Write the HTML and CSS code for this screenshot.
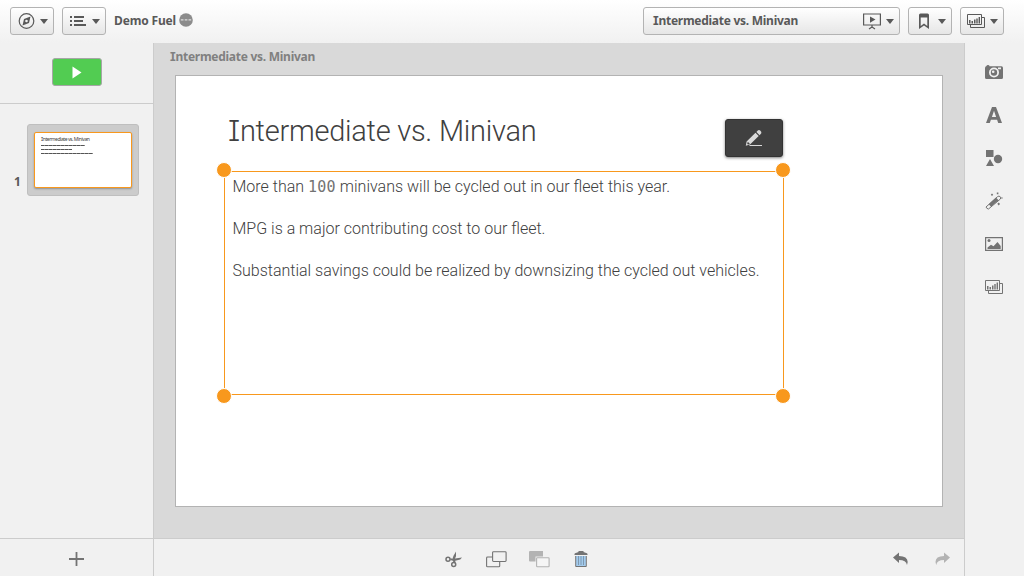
FILE: index.html
```html
<!DOCTYPE html>
<html lang="en">
<head>
<meta charset="utf-8">
<title>Demo Fuel</title>
<link rel="stylesheet" href="styles.css">
</head>
<body>
<div class="app">
  <header class="topbar">
    <button class="btn"><svg width="17" height="16" viewBox="0 0 17 16"><circle cx="8.500" cy="8" r="7.300" fill="none" stroke="#595959" stroke-width="1.200"/><path fill="#595959" fill-rule="evenodd" d="M12.500 3.600 11 10l-6.500 2.500L6 6zM8.500 6.700a1.300 1.300 0 1 0 0 2.600 1.300 1.300 0 0 0 0-2.600"/></svg><i class="caret"></i></button>
    <button class="btn"><svg width="18" height="12" viewBox="0 0 18 12"><path fill="#595959" d="M0 1h2v2H0zM0 5h2v2H0zM0 9h2v2H0zM4 1h10v2H4zM4 5h9v2H4zM4 9h12v2H4z"/></svg><i class="caret"></i></button>
    <span class="appname">Demo Fuel</span>
    <svg class="more" width="14" height="14" viewBox="0 0 14 14"><circle cx="7" cy="7" r="6.800" fill="#8c8c8c"/><path fill="#ddd" d="M1.800 6.200h2.700v1.300H1.800zM5.700 6.200h2.700v1.300H5.700zM9.500 6.200h2.700v1.300H9.500z"/></svg>
    <button class="btn story"><span class="storyname"><span class="serif-i">I</span>ntermediate vs. Minivan</span><svg width="18" height="17" viewBox="0 0 18 17"><path d="M.6 1h16.800v11H.6zM9 12v3M6 16l3-2 3 2" fill="none" stroke="#595959" stroke-width="1.200"/><path d="m7 3.500 5.500 3L7 9.700z" fill="#595959"/></svg><i class="caret"></i></button>
    <button class="btn bookmark"><svg width="12" height="17" viewBox="0 0 12 17"><path fill="#595959" fill-rule="evenodd" d="M1 2Q1 .5 2.500.5h7Q11 .5 11 2V16l-5-3.600L1 16zM2.700 4.500V13L6 10.500 9.300 13V4.500z"/></svg><i class="caret"></i></button>
    <button class="btn sheets"><svg width="19" height="15" viewBox="0 0 19 15"><path d="M.5.5h14v10H.5zM15 3.500h2.500v10H3.500V11" fill="none" stroke="#595959"/><path fill="#595959" d="M2 6h1.500v3.500H2zM4.500 7H6v2.500H4.500zM7 5.500h1.500v4H7zM9.300 4.500h1.400v5H9.300zM11.600 3H13v6.500h-1.400z"/></svg><i class="caret"></i></button>
  </header>
  <aside class="slides">
    <div class="playrow"><button class="play"><svg width="10" height="13" viewBox="0 0 10 13"><path fill="#fff" d="M.5.5 9.500 6.500l-9 6z"/></svg></button></div>
    <div class="thumbrow"><span class="num">1</span>
      <div class="thumb"><div class="mini"><p class="minititle"><span class="serif-i">I</span>ntermediate vs. Minivan</p><i class="line w44"></i><i class="line w31"></i><i class="line w52"></i></div></div>
    </div>
  </aside>
  <main class="stage">
    <div class="sheetname"><span class="serif-i">I</span>ntermediate vs. Minivan</div>
    <div class="slide">
      <h1 class="title"><span class="serif-i">I</span>ntermediate vs. Minivan</h1>
      <button class="edit"><svg width="18" height="18" viewBox="0 0 18 18"><path fill="#d9d9d9" d="M.8 16.700 1.600 12.500 10.500 3.700l3.200 3.200L5 15.500zM11.400 3 12.800 1.500q1.300-1 2.600.3 1.400 1.200.9 2.500l-1.700 1.900zM5 15.900h12v1H4z"/><path fill="#404040" d="m2.800 12.800 2.200 2.200-2 .6-.8-.8z"/></svg></button>
      <div class="textbox">
        <p class="para">More than <span class="zero">100</span> minivans will be cycled out in our fleet this year.</p>
        <p class="para">MPG is a major contributing cost to our fleet.</p>
        <p class="para">Substantial savings could be realized by downsizing the cycled out vehicles.</p>
        <i class="dot tl"></i><i class="dot tr"></i><i class="dot bl"></i><i class="dot br"></i>
      </div>
    </div>
  </main>
  <aside class="tools">
    <svg width="20" height="20" viewBox="0 0 20 20"><path fill="#737373" fill-rule="evenodd" d="M2.500 4Q2.500 3 4 3t1.500 1.200h12Q19 4.200 19 6v9.500q0 1.500-1.500 1.500h-15Q1 17 1 15.500V6q0-1.500 1.500-2M10 5.500a5 5 0 1 0 0 10 5 5 0 0 0 0-10m0 1.800a3.200 3.200 0 1 1 0 6.400 3.200 3.200 0 0 1 0-6.400m4-1.700v1.700h3V5.600z"/><circle cx="9.200" cy="9.800" r="1.300" fill="#f1f1f1"/></svg>
    <svg width="20" height="20" viewBox="0 0 20 20"><path fill="#737373" fill-rule="evenodd" d="M8 2h4l6 16h-3.800l-1.100-3.300H6.900L5.800 18H2zM10 5.800 7.900 12h4.200z"/></svg>
    <svg width="20" height="20" viewBox="0 0 20 20"><path fill="#737373" d="M2 2h7.500v7H2zM6 11l4 7H2z"/><circle cx="14" cy="11" r="4.200" fill="#737373"/></svg>
    <svg width="20" height="20" viewBox="0 0 20 20"><path d="m2 16 11.500-10.300q1.500-1.200 2.700 0t0 2.500L4.500 18q-2-.3-2.500-2z" fill="#f1f1f1" stroke="#737373"/><path fill="#737373" d="m4.700 13.300 7.300-6.700 2.500 2.600-7.400 6.500zM8 2.500 9.200 3.800 8 5 6.800 3.800zM12.800 1.600h1.600v1.600h-1.600zM17.500 6l1.500 1-1.500 1zM13.300 12.700l1.500-1.200 1.200 1.500-1.300 1.500z"/></svg>
    <svg width="20" height="20" viewBox="0 0 20 20"><path d="M1.600 3.600h16.800v12.800H1.600z" fill="none" stroke="#737373" stroke-width="1.200"/><path fill="#737373" d="M3.500 15v-1.500L7 10.800l2.500 1.500L13.500 8l3.200 4v3z"/><circle cx="5" cy="6.500" r="1.500" fill="#737373"/></svg>
    <svg width="20" height="20" viewBox="0 0 20 20"><path d="M1.500 3.500h14v10h-14zM16 6.500h2.500v10h-14V14" fill="none" stroke="#737373"/><path fill="#737373" d="M3 9h1.500v3.500H3zM5.500 10H7v2.500H5.500zM8 8.500h1.500v4H8zM10.300 7h1.400v5.500h-1.400zM12.600 5.500H14v7h-1.400z"/></svg>
  </aside>
  <div class="addbar"><svg width="15" height="14" viewBox="0 0 15 14"><path fill="#737373" d="M0 6h15v2H0zM6.600 0h1.800v14H6.600z"/></svg></div>
  <footer class="editbar">
    <svg width="18" height="18" viewBox="0 0 18 18"><g fill="none" stroke="#737373" stroke-width="1.500"><circle cx="3" cy="9.300" r="2"/><circle cx="8.700" cy="14.500" r="2"/></g><path fill="#737373" d="M11 1.500v4.800L10 8.600l7-1.100-1.800 2-5 1.300.4 2.200-1.900-.3-.8-1.900-2.700-.8.300-1.700 2 .4.900-2.700z"/></svg>
    <svg class="front" width="21" height="17" viewBox="0 0 21 17"><path d="M6.500 6H1.500q-.9 0-.9.900v8q0 .9.900.9h11.300q.9 0 .9-.9v-4.400" fill="none" stroke="#737373" stroke-width="1.100"/><rect x="6.600" y=".7" width="13.500" height="9.800" rx=".9" fill="none" stroke="#737373" stroke-width="1.100"/></svg>
    <svg class="back" width="21" height="17" viewBox="0 0 21 17"><path fill="#b3b3b3" d="M0 1q0-1 1-1h13v5.500H6.500v5H1q-1 0-1-1z"/><rect x="7.600" y="6.700" width="12.500" height="9" rx=".7" fill="#f5f5f5" stroke="#b3b3b3" stroke-width="1.100"/></svg>
    <svg class="trash" width="14" height="17" viewBox="0 0 14 17"><path fill="#737373" d="M.5 3q0-1 2-1.300L4.500 1V0h5v1l2 .7q2 .3 2 1.300v1H.5z"/><path fill="#a3cbed" d="M2 5h10v10H2z"/><path d="M1.700 5v10.500h10.600V5" fill="none" stroke="#737373"/><path d="M4.500 5v9M7 5v9M9.500 5v9" fill="none" stroke="#7f99b0"/></svg>
    <svg class="undo" width="16" height="14" viewBox="0 0 16 14"><path fill="#737373" d="m0 5.500 6-5V4q8.500 0 8.700 6l-.7 3q-.8-5-8-5v3z"/></svg>
    <svg class="redo" width="16" height="14" viewBox="0 0 16 14"><path fill="#b3b3b3" d="m15 5.500-6-5V4Q.500 4 .500 10l.7 3Q2 8 9 8v3z"/></svg>
  </footer>
</div>
</body>
</html>
```
FILE: styles.css
```css
* { box-sizing: border-box; }
body { margin: 0; font-family: "Noto Sans", sans-serif; color: #595959; }
button { margin: 0; padding: 0; font: inherit; color: inherit; }
svg { display: block; flex: none; }
p, h1 { margin: 0; white-space: nowrap; }
.serif-i { font-family: Inter, sans-serif; font-feature-settings: "cv08"; }
.zero { font-family: "DejaVu Sans Mono", monospace; font-size: 15px; color: #737373; letter-spacing: .3px; }

.app {
  width: 1024px; height: 576px; overflow: hidden;
  display: grid;
  grid-template: 43px 495px 38px / 154px 811px 59px;
  background: #f1f1f1;
}
.topbar {
  grid-column: 1 / -1;
  display: flex; align-items: flex-start; gap: 8px;
  padding: 7px 20px 0 10px;
  background: linear-gradient(#fff, #f1f1f1);
}
.btn {
  width: 44px; height: 28px; flex: none;
  display: flex; align-items: center; justify-content: space-between;
  padding: 0 5px 0 7px;
  border: 1px solid #b3b3b3; border-radius: 3px;
  background: linear-gradient(#fff, #e6e6e6);
}
.btn.bookmark { padding: 0 5px 0 9px; }
.btn.sheets { padding-left: 6px; }
.caret { border: 4px solid transparent; border-top: 5px solid #595959; border-bottom: 0; }
.appname { font-size: 12px; font-weight: 700; line-height: 27px; letter-spacing: -.15px; width: 61px; white-space: nowrap; }
.more { margin: 6px auto 0 -4.5px; }
.btn.story { width: 257px; padding-left: 9px; }
.storyname { font-size: 12px; line-height: 16px; font-weight: 700; white-space: nowrap; margin-right: auto; letter-spacing: -.27px; }
.btn.story svg { margin-right: 5px; }

.slides { border-right: 1px solid #ccc; }
.playrow { height: 61px; padding: 15px 0 0 52px; border-bottom: 1px solid #ccc; }
.play {
  width: 50px; height: 28px; display: flex; align-items: center; justify-content: center;
  background: #52cc52; border: 1px solid #a6a6a6; border-radius: 3px;
}
.thumbrow { display: flex; padding: 20px 0 0 14px; }
.num { width: 13px; padding-top: 49px; font-size: 12px; line-height: 17px; font-weight: 700; }
.thumb { width: 112px; height: 72px; padding: 7px 6px; background: #ccc; border: 1px solid #bfbfbf; border-radius: 3px; }
.mini {
  width: 98px; height: 56px; padding: 3px 0 0 6px; background: #fff;
  border: 1px solid #f8981d; border-radius: 2px; box-shadow: 0 1px 2px rgba(0,0,0,.3);
}
.minititle { font-size: 5px; line-height: 7px; letter-spacing: -.43px; color: #404040; }
.line { display: block; height: 1px; margin: 2px 0 3px; background: repeating-linear-gradient(90deg, #555 0 3px, #888 3px 4px); }
.w44 { width: 44px; }
.w31 { width: 31px; }
.w52 { width: 52px; }

.stage { background: #d9d9d9; border-right: 1px solid #ccc; padding-left: 21px; }
.sheetname { height: 32px; margin-left: -5px; font-size: 12px; line-height: 27px; font-weight: 700; color: #808080; letter-spacing: -.27px; }
.slide { position: relative; width: 768px; height: 432px; background: #fff; border: 1px solid #b3b3b3; }
.title { position: absolute; left: 52px; top: 35px; font-family: Roboto, sans-serif; font-size: 29px; line-height: 40px; font-weight: 300; letter-spacing: -.25px; color: #404040; }
.edit {
  position: absolute; left: 549px; top: 43px; width: 58px; height: 38px;
  display: flex; align-items: center; justify-content: center;
  background: #404040; border: 1px solid #333; border-radius: 3px; box-shadow: 0 1px 3px rgba(0,0,0,.5);
}
.textbox { position: absolute; left: 48px; top: 95px; width: 560px; height: 224px; border: 1px solid #f8981d; padding: 4px 7.5px; }
.para { font-family: Roboto, sans-serif; font-size: 16px; line-height: 21px; height: 42px; font-weight: 300; color: #404040; }
.dot { position: absolute; width: 16px; height: 16px; border-radius: 50%; background: #f8981d; border: 1px solid #fff; }
.tl { left: -9px; top: -10px; }
.tr { right: -8px; top: -10px; }
.bl { left: -9px; bottom: -10px; }
.br { right: -8px; bottom: -10px; }

.tools { grid-row: 2 / 4; grid-column: 3; display: flex; flex-direction: column; align-items: center; gap: 23px; padding: 19px 1px 0 0; }
.addbar { grid-row: 3; display: flex; align-items: center; justify-content: center; border-top: 1px solid #ccc; border-right: 1px solid #ccc; padding-top: 3px; }
.editbar { grid-row: 3; display: flex; align-items: center; border: solid #ccc; border-width: 1px 1px 0 0; padding: 3px 13px 0 291px; }
.front { margin-left: 23px; }
.back { margin-left: 22px; }
.trash { margin-left: 24px; }
.undo { margin-left: auto; }
.redo { margin-left: 26px; }
```
